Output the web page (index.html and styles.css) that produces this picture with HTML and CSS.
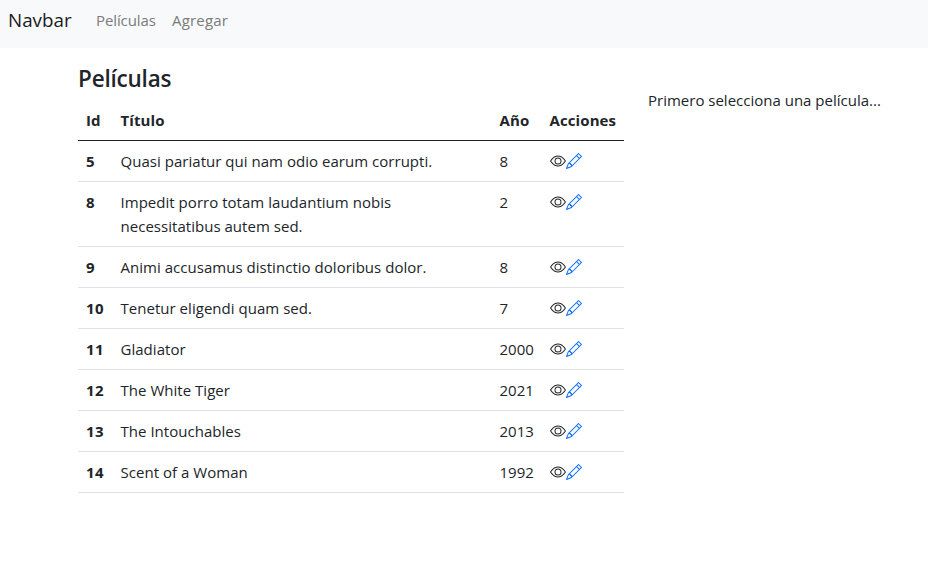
FILE: index.html
```
<!DOCTYPE html>
<html lang="es">
<head>
<meta charset="utf-8">
<title>Películas</title>
<link rel="stylesheet" href="styles.css">
</head>
<body>
<svg class="sprite" aria-hidden="true">
  <symbol id="eye" viewBox="0 0 16 16"><path d="M16 8s-3-5.5-8-5.5S0 8 0 8s3 5.5 8 5.5S16 8 16 8zM1.173 8a13.133 13.133 0 0 1 1.66-2.043C4.12 4.668 5.88 3.5 8 3.5c2.12 0 3.879 1.168 5.168 2.457A13.133 13.133 0 0 1 14.828 8c-.058.087-.122.183-.195.288-.335.48-.83 1.12-1.465 1.755C11.879 11.332 10.119 12.5 8 12.5c-2.12 0-3.879-1.168-5.168-2.457A13.134 13.134 0 0 1 1.172 8z"/><path d="M8 5.5a2.5 2.5 0 1 0 0 5 2.5 2.5 0 0 0 0-5zM4.5 8a3.5 3.5 0 1 1 7 0 3.5 3.5 0 0 1-7 0z"/></symbol>
  <symbol id="pencil" viewBox="0 0 16 16"><path d="M12.146.146a.5.5 0 0 1 .708 0l3 3a.5.5 0 0 1 0 .708l-10 10a.5.5 0 0 1-.168.11l-5 2a.5.5 0 0 1-.65-.65l2-5a.5.5 0 0 1 .11-.168l10-10zM11.207 2.5 13.5 4.793 14.793 3.5 12.5 1.207 11.207 2.5zm1.586 3L10.5 3.207 4 9.707V10h.5a.5.5 0 0 1 .5.5v.5h.5a.5.5 0 0 1 .5.5v.5h.293l6.5-6.5zm-9.761 5.175-.106.106-1.528 3.821 3.821-1.528.106-.106A.5.5 0 0 1 5 12.5V12h-.5a.5.5 0 0 1-.5-.5V11h-.5a.5.5 0 0 1-.468-.325z"/></symbol>
</svg>
<nav class="navbar">
  <a class="brand">Navbar</a>
  <a class="nav-link">Películas</a>
  <a class="nav-link add">Agregar</a>
</nav>
<main class="container">
  <section class="list">
    <h4>Películas</h4>
    <table>
      <colgroup><col class="c-id"><col class="c-title"><col class="c-year"><col class="c-actions"></colgroup>
      <thead><tr><th>Id</th><th>Título</th><th>Año</th><th>Acciones</th></tr></thead>
      <tbody>
        <tr><th>5</th><td>Quasi pariatur qui nam odio earum corrupti.</td><td>8</td><td><div class="actions"><svg class="eye"><use href="#eye"/></svg><svg class="pencil"><use href="#pencil"/></svg></div></td></tr>
        <tr><th>8</th><td>Impedit porro totam laudantium nobis necessitatibus autem sed.</td><td>2</td><td><div class="actions"><svg class="eye"><use href="#eye"/></svg><svg class="pencil"><use href="#pencil"/></svg></div></td></tr>
        <tr><th>9</th><td>Animi accusamus distinctio doloribus dolor.</td><td>8</td><td><div class="actions"><svg class="eye"><use href="#eye"/></svg><svg class="pencil"><use href="#pencil"/></svg></div></td></tr>
        <tr><th>10</th><td>Tenetur eligendi quam sed.</td><td>7</td><td><div class="actions"><svg class="eye"><use href="#eye"/></svg><svg class="pencil"><use href="#pencil"/></svg></div></td></tr>
        <tr><th>11</th><td>Gladiator</td><td>2000</td><td><div class="actions"><svg class="eye"><use href="#eye"/></svg><svg class="pencil"><use href="#pencil"/></svg></div></td></tr>
        <tr><th>12</th><td>The White Tiger</td><td>2021</td><td><div class="actions"><svg class="eye"><use href="#eye"/></svg><svg class="pencil"><use href="#pencil"/></svg></div></td></tr>
        <tr><th>13</th><td>The Intouchables</td><td>2013</td><td><div class="actions"><svg class="eye"><use href="#eye"/></svg><svg class="pencil"><use href="#pencil"/></svg></div></td></tr>
        <tr><th>14</th><td>Scent of a Woman</td><td>1992</td><td><div class="actions"><svg class="eye"><use href="#eye"/></svg><svg class="pencil"><use href="#pencil"/></svg></div></td></tr>
      </tbody>
    </table>
  </section>
  <aside class="detail">Primero selecciona una película...</aside>
</main>
</body>
</html>
```
FILE: styles.css
```
* { box-sizing: border-box; }
body {
  margin: 0;
  background: #fff;
  color: #212529;
  font: 400 15px/24px "Open Sans", "Noto Sans", sans-serif;
}
.sprite { display: none; }
.navbar {
  display: flex;
  height: 48px;
  padding: 5px 8px 0;
  background: #f8f9fa;
}
.brand {
  width: 88px;
  font-size: 18.8px;
  line-height: 31px;
  color: #1a1b1c;
}
.nav-link { width: 76px; line-height: 30px; color: #7a7b7c; letter-spacing: -0.1px; }
.add { letter-spacing: 0.2px; }
.container {
  display: flex;
  gap: 24px;
  padding: 16px 0 0 78px;
}
.list { width: 546px; }
h4 {
  margin: 0 0 7px;
  font-size: 22.5px;
  font-weight: 600;
  line-height: 29px;
  letter-spacing: -0.2px;
}
table {
  width: 100%;
  table-layout: fixed;
  border-collapse: separate;
  border-spacing: 0;
}
.c-id { width: 34.5px; }
.c-title { width: 379px; }
.c-year { width: 50px; }
th, td {
  padding: 8px;
  border-bottom: 1px solid #dee2e6;
  text-align: left;
  vertical-align: top;
}
th { font-weight: 700; white-space: nowrap; letter-spacing: 0.1px; }
tbody th { letter-spacing: 0.4px; }
tbody td { letter-spacing: 0.03px; }
thead th { border-bottom-color: #212529; }
.actions { display: flex; align-items: center; height: 24px; }
.actions svg { width: 16px; height: 16px; fill: currentColor; }
.actions .pencil { color: #0d6efd; }
.detail { padding-top: 24px; }
```
